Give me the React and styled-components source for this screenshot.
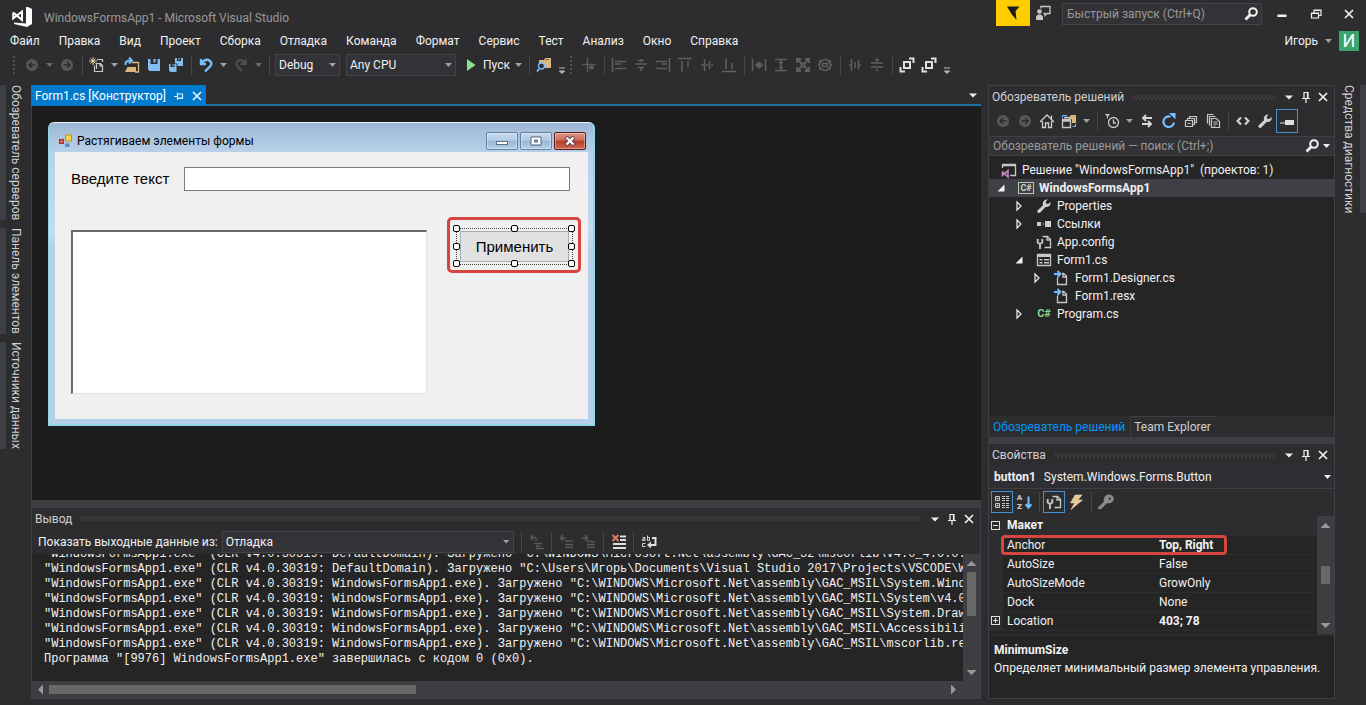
import { useState } from 'react'
import styled, { createGlobalStyle, css } from 'styled-components'

const GlobalStyle = createGlobalStyle`
  * {
    box-sizing: border-box;
  }
  body {
    margin: 0;
    background: #2d2d30;
    color: #f1f1f1;
    font-family: Roboto, "Noto Sans", sans-serif;
    font-size: 12px;
    line-height: 18px;
  }
  button, input, select {
    font: inherit;
    color: inherit;
    margin: 0;
    padding: 0;
    border: 0;
    border-radius: 0;
    background: none;
  }
  button {
    cursor: pointer;
  }
`

/* ---------- icons ---------- */

const Svg = styled.svg`
  display: block;
  flex: none;
  overflow: visible;
`

const icons = {
  back: <><circle cx="8" cy="8" r="6" fill="#58585b" /><path d="M11.5 8H5M8 5 5 8l3 3" stroke="#2d2d30" strokeWidth="1.5" fill="none" /></>,
  forward: <><circle cx="8" cy="8" r="6" fill="#58585b" /><path d="M4.500 8H11M8 5l3 3-3 3" stroke="#2d2d30" strokeWidth="1.5" fill="none" /></>,
  newItem: <>
    <path d="M8 2.500h5.500V5M5.500 8.500v6h6M7.500 12V6.500h4l2 2v6h-4M11 6.500V9h2.500" stroke="#c8c8c8" strokeWidth="1.200" fill="none" />
    <path d="M4 0v8M0 4h8M1.500 1.500l5 5M6.500 1.500l-5 5" stroke="#e6d3a8" fill="none" />
  </>,
  open: <>
    <path d="M1 15 3.500 10H12v5z" fill="#dcb67a" />
    <path d="M8 5.500h6.500V15H11" stroke="#dcb67a" strokeWidth="1.300" fill="none" />
    <path d="M1.500 8C1 4.500 3.500 3.500 7 3.500M5 .5l3 3-3 3" stroke="#75beff" strokeWidth="2" fill="none" />
  </>,
  save: <path d="M2 2h2.500v5h7V2H14v12H3.500L2 12.500zM7.500 2h2v3.500h-2z" fill="#83bdf2" />,
  saveAll: <path d="M7 1h2v3h4V1h2v8H9.500V6.500H7zM1 7h1.500v3h4V7H8.500v8H2.500L1 13.500zM10.500 1h1v2h-1zM4.500 7h1v2h-1z" fill="#83bdf2" />,
  undo: <path d="M3 2v5h5M3.500 6.500C6 3 9 2 11.500 3.500c3 2.500 2 5-.5 7L7 14.500" stroke="#75beff" strokeWidth="2.400" fill="none" />,
  redo: <path d="M12.500 2v5h-5M12 6.500C10 3 7 2 5 4c-2.500 2.500-1.500 4.500.5 6.500L9 14" stroke="#505053" strokeWidth="2" fill="none" />,
  play: <path d="M4 2 12.500 8 4 14z" fill="#8ae28a" />,
  findFolder: <>
    <path d="M3 3h5l1-2h6v10H9L3 7z" fill="#dcb67a" />
    <path d="M9 2.500h4" stroke="#8a7048" />
    <circle cx="5.500" cy="9" r="3" fill="#2d2d30" stroke="#75beff" strokeWidth="1.300" />
    <path d="M3.500 11.500 1 14.500" stroke="#75beff" strokeWidth="1.800" />
  </>,
  overflow: <path d="M5 11h6M5.500 14h5L8 16.500z" stroke="#b8b8b8" fill="#b8b8b8" strokeWidth="1" />,
  alignGrid: <path d="M1 7.500h14M6.500 1v14M9 9.500h3v2H9z" stroke="#5a5a5d" strokeWidth="1.500" fill="#5a5a5d" />,
  alignLeft: <path d="M1.500 1v14M4 4.500h11M4 7h6M4 11.500h11" stroke="#5f5f62" strokeWidth="1.500" />,
  alignCenter: <path d="M2 7h12M5 10.500h6M8 2v3M8 11v3M5 3.500h6" stroke="#5f5f62" strokeWidth="1.500" />,
  alignRight: <path d="M14.500 1v14M1 4.500h11M7 7h5M1 11.500h11" stroke="#5f5f62" strokeWidth="1.500" />,
  alignTop: <path d="M1 1.500h14M5 4v11M11 4v6" stroke="#5f5f62" strokeWidth="1.500" />,
  alignMiddle: <path d="M5.500 2v12M10.500 4v8M2 8h3M7 8h2M12 8h2" stroke="#5f5f62" strokeWidth="1.500" />,
  alignBottom: <path d="M1 14.500h14M5 1v11M11 6v6" stroke="#5f5f62" strokeWidth="1.500" />,
  sameWidth: <path d="M1.500 2v12M14.500 2v12M4 8h8M8 4.500v7M5.500 5.500l5 5M10.500 5.500l-5 5" stroke="#5f5f62" strokeWidth="1.500" />,
  sameHeight: <path d="M2 2.500h12M2 13.500h12M8 3v10M6 5.500h4M6 10.500h4" stroke="#5f5f62" strokeWidth="1.500" fill="none" />,
  sameSize: <path d="M2 6V2h4M10 2h4v4M14 10v4h-4M6 14H2v-4M2 2l4.500 4.500M14 2 9.500 6.500M14 14 9.500 9.500M2 14l4.500-4.500M6.500 6.500h3v3h-3z" stroke="#5f5f62" strokeWidth="1.800" fill="none" />,
  sizeGrid: <><circle cx="8" cy="8" r="5.500" stroke="#5f5f62" strokeWidth="1.500" fill="none" /><path d="M5.500 6.500h5v3h-5zM2 4h3M11 4h3M2 12h3M11 12h3M1 8h2M13 8h2" stroke="#5f5f62" strokeWidth="1.300" fill="none" /></>,
  spaceH: <path d="M4.500 2v12M8 5v6M11.500 3v9M2 8h2M12 8h2" stroke="#5f5f62" strokeWidth="1.500" />,
  spaceV: <path d="M2 6h12M2 10h12M8 1.500v3M8 11.500V14M6 3h4" stroke="#5f5f62" strokeWidth="1.500" />,
  bringFront: <path d="M5 5h6v6H5zM10 1.500h4.500V6M1.500 10v4.500H6" stroke="#e0e0e0" strokeWidth="2" fill="none" />,
  sendBack: <path d="M5 5h6v6H5zM10 1.500h4.500V6M1.500 10v4.500H6" stroke="#e0e0e0" strokeWidth="2" fill="none" />,
  search: <><circle cx="10" cy="6" r="3.800" stroke="#f1f1f1" strokeWidth="2" fill="none" /><path d="M7.500 8.500 2.500 13.500" stroke="#f1f1f1" strokeWidth="2.800" /></>,
  feedback: <>
    <circle cx="4.500" cy="6.500" r="2.300" fill="#c8c8c8" />
    <path d="M1 15v-3.500L3 9.500h3l2 2V15z" fill="#c8c8c8" />
    <path d="M6 3.500v-2h9v7h-3l-2 2v-2H8.500" stroke="#c8c8c8" strokeWidth="1.300" fill="none" />
  </>,
  flag: <path d="M2 1.500h12.500L10.500 6l1 9L6.500 9z" fill="#1b1b1b" />,
  minimize: <path d="M3.500 8.500h9v2.500h-9z" fill="#f1f1f1" />,
  restore: <path d="M6 6.500V4h7v5.500h-2.500M3.500 7h7v5h-7zM3.500 7.500h7M6 4.500h7" stroke="#f1f1f1" strokeWidth="1.200" fill="none" />,
  close: <path d="M4 4l8 8M12 4l-8 8" stroke="#f1f1f1" strokeWidth="1.700" />,
  pin: <path d="M6 9V3.500h4V9M4 9.500h8M9.500 3.500V9M8 9.500V14" stroke="#f1f1f1" strokeWidth="1.200" fill="none" />,
  pinTab: <path d="M8 6h4.500v4.500H8M7.500 4.500v7.500M4 8.500h4M8 10h4.500" stroke="#d5ecfa" strokeWidth="1.200" fill="none" />,
  caret: <path d="M4 6.500h8L8 10.500z" fill="#f1f1f1" />,
  home: <path d="M1 9 8 2l7 7M3.500 8v6.500h3V10h3v4.500h3V8M12.500 6V2.500" stroke="#d0d0d0" strokeWidth="1.300" fill="none" />,
  scope: <>
    <path d="M1.500 6.500h8v8h-8zM1 8h9M3 4.500h6V6" stroke="#c8c8c8" strokeWidth="1.300" fill="none" />
    <path d="M9 3.500 10 2h5v8h-4V6H9z" fill="#dcb67a" />
    <path d="M1.500 5V2.500H6M14.500 11v2.500h-3" stroke="#75beff" fill="none" />
  </>,
  pending: <><circle cx="9.500" cy="9.500" r="5" stroke="#c8c8c8" strokeWidth="1.300" fill="none" /><path d="M9.500 6.500v3.500H12" stroke="#c8c8c8" strokeWidth="1.300" fill="none" /><path d="M1 1h5L4 3.500V6L3 5V3.500z" fill="#c8c8c8" /></>,
  sync: <path d="M13 5H4M7 2 4 5l3 3M3 11h9M9 8l3 3-3 3" stroke="#d8d8d8" strokeWidth="1.900" fill="none" />,
  refresh: <>
    <path d="M13 9.500A5.300 5.300 0 1 1 9.500 3.700" stroke="#75beff" strokeWidth="2.200" fill="none" />
    <path d="M8 0h6.500v6.500z" fill="#75beff" />
  </>,
  collapse: <path d="M2.500 7.500h7v6h-7zM4.500 7V5.500h7v6H10M6.500 5V3.500h7v6H12M4.500 10.500h3" stroke="#c8c8c8" strokeWidth="1.200" fill="none" />,
  showAll: <path d="M6.500 5.500h5l3 3v6h-8zM4.500 12.500V3.500h6M2.500 10.500V1.500h6M8.500 9h4M8.500 11h4M8.500 13h2" stroke="#c8c8c8" strokeWidth="1.200" fill="none" />,
  code: <path d="M6 4.500 2.500 8 6 11.500M10 4.500 13.500 8 10 11.500" stroke="#d8d8d8" strokeWidth="2" fill="none" />,
  wrench: <path d="M1.500 12.500 7 7.200C6.200 4.200 8 1.500 11.500 1.600L9.600 4.200l.8 1.600 1.900.3 2.300-2c.6 3.300-2.300 5.600-5 4.800L4.300 14.500c-1.500 1.200-4-.5-2.800-2z" fill="#d0d0d0" />,
  preview: <path d="M1 9.500h5V7h9v5H6v-1.500H1z" fill="#e0e0e0" />,
  solution: <>
    <path d="M1.500 6V2.500h13v11H9M1 3.500h14" stroke="#c8c8c8" strokeWidth="1.300" fill="none" />
    <path d="M1.500 9.500v4L7 8.500v6.500L1.500 9.500" stroke="#c586c0" strokeWidth="1.600" fill="none" />
  </>,
  references: <path d="M1 6h4v4H1zM9 5h6v6H9zM6.500 7.500h1.500v1H6.500z" fill="#d0d0d0" />,
  config: <>
    <path d="M6.500 2.500h5l3 3v8h-6M11 2.500v3.500h3.500" stroke="#c8c8c8" strokeWidth="1.300" fill="none" />
    <path d="M1.700 5v3.500L4 10l2.300-1.500V5M4 9.500v5.500" stroke="#c8c8c8" strokeWidth="1.900" fill="none" />
  </>,
  form: <><path d="M1.500 2.500h13v11h-13z" stroke="#c8c8c8" strokeWidth="1.300" fill="none" /><path d="M1 2h14v3H1zM3.500 7h3v1.600h-3zM8 7h5v1.600H8zM3.500 10h3v1.600h-3zM8 10h5v1.600H8z" fill="#c8c8c8" /></>,
  nested: <>
    <path d="M3.500 7.500v7h9V6l-3-2.500H8M9 4v3h3.500" stroke="#c8c8c8" strokeWidth="1.300" fill="none" />
    <path d="M0 4h6M3.500 1l3 3-3 3" stroke="#75beff" strokeWidth="1.800" fill="none" />
  </>,
  categorized: <path d="M1.500 2.500h4v4h-4zM1.500 9.500h4v4h-4zM2.500 4.500h2M3.500 3.500v2M2.500 11.500h2M3.500 10.500v2M8 2.500h3M12 2.500h3M8 4.500h3M12 4.500h3M8 6.500h3M12 6.500h3M8 9.500h3M12 9.500h3M8 11.500h3M12 11.500h3M8 13.500h3M12 13.500h3" stroke="#c8c8c8" fill="none" />,
  sortArrow: <path d="M12 3v10M9.500 10l2.500 3 2.500-3" stroke="#75beff" strokeWidth="1.800" fill="none" />,
  events: <path d="M7 1h7l-4 5h4.500L3 15.500 6.500 9H2.500z" fill="#e8c896" stroke="#f3e2c4" strokeWidth="0.500" />,
  key: <path d="M0 13.500 6 7.500C5 4 7.500 .5 11 .5c5 0 6.500 6 2.500 8-2 1-3.500 1-4.500.5L7.500 11H6.500l-.5 2H4.500l-1 2H0zM11.500 3l1.500 1.500-1 1.500-1.500-1z" fill="#8a8a8c" fillRule="evenodd" />,
  outSource: <path d="M2 3.500h5M4 1 2 3.500 4 6M7 3.500V7M5 9.500h8M7 12h4M7 14.500h8" stroke="#5a5a5d" strokeWidth="1.400" fill="none" />,
  outPrev: <path d="M1 4h6M4 1 1.500 4 4 7M6 7h8M6 10.500h8M6 13.500h8" stroke="#5a5a5d" strokeWidth="1.600" fill="none" />,
  outNext: <path d="M1 4h6M4 1l2.500 3L4 7M6 7.500h8M6 10.500h8M6 13.500h8" stroke="#5a5a5d" strokeWidth="1.600" fill="none" />,
  clearAll: <><path d="M9 2.500h6M9 6h6M2 10h13M2 14h13" stroke="#e0e0e0" strokeWidth="2" /><path d="M1.500 1l6 6M7.500 1l-6 6" stroke="#e57a5e" strokeWidth="1.900" /></>,
}

const Icon = ({ name, size = 16 }) => (
  <Svg width={size} height={size} viewBox="0 0 16 16" aria-hidden="true">{icons[name]}</Svg>
)

/* ---------- shared parts ---------- */

const IconButton = styled.button`
  display: flex;
  align-items: center;
  justify-content: center;
  flex: none;
  width: ${p => p.$width || 22}px;
  height: ${p => p.$height || 22}px;
  border: 1px solid ${p => (p.$active ? '#4a90d0' : 'transparent')};
  background: ${p => (p.$fill ? p.$fill : 'transparent')};
  &:hover {
    background: ${p => (p.$fill ? p.$fill : '#3e3e40')};
  }
`

const Separator = styled.span`
  flex: none;
  width: 8px;
  height: 20px;
  background: linear-gradient(#464649, #464649) center / 1px 100% no-repeat;
`

const Caret = styled.span`
  flex: none;
  width: 13px;
  height: 4px;
  background: ${p => (p.$dim ? '#6a6a6d' : p.$bright ? '#f1f1f1' : '#a0a0a2')};
  clip-path: polygon(3px 0, 10px 0, 6.5px 4px);
`

const Grip = styled.span`
  flex: none;
  width: 6px;
  height: 20px;
  margin-right: 4px;
  background: radial-gradient(circle, #505053 1px, transparent 1px) 1px 0 / 4px 4px;
`

const Spacer = styled.span`
  flex: 1;
`

const Shell = styled.div`
  display: flex;
  flex-direction: column;
  min-height: 100vh;
  padding-bottom: 6px;
  overflow: hidden;
`

/* ---------- title, menu, toolbar ---------- */

const TitleBar = styled.header`
  display: flex;
  align-items: flex-start;
  height: 31px;
  padding-left: 11px;
`

const Title = styled.h1`
  flex: 1;
  margin: 9px 0 0 11px;
  font-size: 12px;
  font-weight: 400;
  color: #999;
`

const QuickSearch = styled.label`
  display: flex;
  align-items: center;
  width: 200px;
  height: 22px;
  margin: 3px 3px 0 7px;
  padding: 0 2px 0 4px;
  border: 1px solid #434346;
  background: #333337;
  input {
    flex: 1;
    min-width: 0;
    outline: none;
  }
  input::placeholder {
    color: #999;
    opacity: 1;
  }
`

const MenuBar = styled.nav`
  display: flex;
  align-items: center;
  height: 20px;
  gap: 19px;
  padding: 0 7px 0 10px;
`

const MenuItem = styled.a`
  color: #f1f1f1;
  text-decoration: none;
`

const Account = styled.button`
  display: flex;
  align-items: center;
  gap: 4px;
`

const Avatar = styled.span`
  width: 20px;
  height: 20px;
  background: #3aa46c;
  color: #fff;
  font-size: 18px;
  line-height: 20px;
  text-align: center;
`

const Toolbar = styled.div`
  display: flex;
  align-items: center;
  height: 28px;
  padding-left: 11px;
`

const SelectBox = styled.span`
  display: grid;
  align-items: center;
  width: ${p => p.$width}px;
  height: 22px;
  margin-left: ${p => p.$before || 0}px;
  margin-right: ${p => p.$after || 0}px;
  border: 1px solid #434346;
  background: #333337;
  select, > span {
    grid-area: 1 / 1;
  }
  select {
    appearance: none;
    height: 20px;
    padding-left: 3px;
    outline: none;
  }
  > span {
    justify-self: end;
    pointer-events: none;
  }
`

const StartButton = styled.button`
  display: flex;
  align-items: center;
  width: 65px;
  height: 22px;
  padding-left: 3px;
  svg {
    margin-right: 4px;
  }
`

const StartLabel = styled.span`
  flex: 1;
  text-align: left;
`

/* ---------- side strips ---------- */

const Body = styled.div`
  display: flex;
  flex: 1;
  padding-top: 6px;
`

const Strip = styled.aside`
  display: flex;
  flex-direction: column;
  align-items: ${p => (p.$right ? 'flex-end' : 'flex-start')};
  gap: 8px;
  width: 31px;
`

const StripTab = styled.button`
  writing-mode: vertical-rl;
  text-align: left;
  line-height: 18px;
  color: #d0d0d0;
  ${p => p.$right
    ? css`
      border-right: 6px solid #3f3f46;
      padding-right: 2px;
    `
    : css`
      border-left: 6px solid #3f3f46;
      padding-left: 1px;
    `}
`

/* ---------- document well ---------- */

const Center = styled.main`
  display: flex;
  flex-direction: column;
  flex: 1;
  min-width: 0;
  margin-right: 7px;
`

const TabRow = styled.div`
  display: flex;
  align-items: center;
  justify-content: space-between;
  height: 21px;
  border-bottom: 2px solid #1c6f9f;
`

const DocTab = styled.div`
  display: flex;
  align-items: center;
  align-self: flex-start;
  height: 21px;
  padding-left: 4px;
  background: #007acc;
  color: #fff;
  button:first-of-type {
    margin-left: 2px;
  }
`

const Designer = styled.section`
  flex: 1;
  padding: 16px;
  background: #1c1c1c;
  border-left: 1px solid #3f3f46;
`

const FormWindow = styled.div`
  width: 547px;
  border: 1px solid #8fd8e8;
  border-width: 1px 2px 2px 1px;
  border-top-color: #e8f1f8;
  border-radius: 6px 6px 0 0;
  background: linear-gradient(#9db8d4, #b9d1ea 30px, #c4daf0 110px, #b7d0ea 125px);
  padding: 0 5px 5px 6px;
`

const FormTitle = styled.div`
  display: flex;
  align-items: center;
  height: 29px;
  padding: 6px 2px 0 4px;
  color: #000;
  > span {
    flex: 1;
    margin-left: 4px;
  }
`

const CaptionButton = styled.button`
  display: flex;
  align-items: center;
  justify-content: center;
  width: 32px;
  height: 18px;
  margin-left: 2px;
  border: 1px solid ${p => (p.$red ? '#5a1a18' : '#6482a5')};
  border-radius: 2px;
  box-shadow: inset 0 0 0 1px rgba(255, 255, 255, 0.35);
  background: ${p => (p.$red
    ? 'linear-gradient(#e09a8a, #cf6a58 45%, #b5402c 50%, #cf6550)'
    : 'linear-gradient(#c5d9ee, #b4cce5 45%, #98b6d4 50%, #b5cfe8)')};
`

const FormClient = styled.div`
  padding: 15px 7px 25px 16px;
  background: #f0f0f0;
  color: #000;
  font-family: "Liberation Sans", Arial, sans-serif;
  font-size: 15px;
`

const Field = styled.label`
  display: flex;
  align-items: center;
  gap: 15px;
  margin: 0 11px 26px 0;
  input {
    flex: 1;
    min-width: 0;
    height: 24px;
    border: 1px solid #7a7a7a;
    background: #fff;
  }
`

const FormRow = styled.div`
  display: flex;
  align-items: flex-start;
  gap: 20px;
`

const ListBox = styled.div`
  flex: 1;
  height: 164px;
  margin-top: 13px;
  border: 1px solid;
  border-width: 2px 1px 1px 2px;
  border-color: #696969 #e3e3e3 #e3e3e3 #696969;
  background: #fff;
`

const RedFrame = styled.div`
  padding: 8px 5px 5px 6px;
  border: 3px solid #d6453f;
  border-radius: 5px;
`

const Selection = styled.div`
  position: relative;
  padding: 2px 3px;
  border: 1px dotted #444;
`

const ApplyButton = styled.button`
  display: block;
  width: 109px;
  height: 31px;
  border: 1px solid #adadad;
  background: #e1e1e1;
`

const Handle = styled.i`
  position: absolute;
  left: ${p => p.$x}%;
  top: ${p => p.$y}%;
  width: 7px;
  height: 7px;
  margin: -4px 0 0 -4px;
  border: 1px solid #000;
  border-radius: 2px;
  background: #fff;
`

/* ---------- output ---------- */

const Splitter = styled.div`
  height: ${p => p.$size}px;
  background: #3e3e42;
`

const PanelHeader = styled.header`
  display: flex;
  align-items: center;
  height: ${p => p.$height || 22}px;
  padding: 0 3px 0 3px;
  h2 {
    margin: 0;
    font-size: 12px;
    font-weight: 400;
    color: #d0d0d0;
  }
`

const HeaderDots = styled.span`
  flex: 1;
  height: 5px;
  margin: 0 6px 0 8px;
  background:
    radial-gradient(circle, #3e3e41 1px, transparent 1px) 0 0 / 4px 4px,
    radial-gradient(circle, #3e3e41 1px, transparent 1px) 2px 2px / 4px 4px;
`

const Output = styled.section`
  border: 1px solid #3f3f46;
  border-top: 0;
`

const OutputBar = styled.div`
  display: flex;
  align-items: center;
  height: 25px;
  padding: 0 6px;
`

const OutputLabel = styled.label`
  margin-right: 4px;
`

const LogArea = styled.div`
  display: flex;
  height: 127px;
  background: #252526;
`

const Log = styled.pre`
  display: flex;
  flex-direction: column;
  justify-content: flex-end;
  flex: 1;
  min-width: 0;
  height: 100%;
  margin: 0;
  padding: 0 0 14px 12px;
  overflow: hidden;
  font-family: "Liberation Mono", monospace;
  font-size: 12px;
  line-height: 15px;
`

const ScrollTrack = styled.div`
  display: flex;
  align-items: center;
  flex: none;
  flex-direction: ${p => (p.$horizontal ? 'row' : 'column')};
  width: ${p => (p.$horizontal ? 'auto' : '17px')};
  height: ${p => (p.$horizontal ? '17px' : 'auto')};
  padding: ${p => (p.$horizontal ? '0 22px 0 4px' : '4px 0')};
  background: #3e3e42;
`

const ScrollArrow = styled.button`
  width: 10px;
  height: 10px;
  flex: none;
  background: #999;
  clip-path: ${p => ({
    up: 'polygon(0 8px, 10px 8px, 5px 3px)',
    down: 'polygon(0 3px, 10px 3px, 5px 8px)',
    left: 'polygon(7px 0, 7px 10px, 2px 5px)',
    right: 'polygon(3px 0, 3px 10px, 8px 5px)',
  }[p.$dir])};
`

const ScrollRail = styled.div`
  flex: 1;
  ${p => (p.$horizontal ? 'padding: 0 3px;' : '')}
`

const ScrollThumb = styled.div`
  background: #686868;
  ${p => (p.$horizontal
    ? css`width: ${p.$size}; height: 9px;`
    : css`width: 9px; height: ${p.$size}; margin-top: ${p.$start || 0}px;`)}
`

/* ---------- right dock ---------- */

const Dock = styled.div`
  display: flex;
  flex-direction: column;
  width: 347px;
`

const Panel = styled.section`
  display: flex;
  flex-direction: column;
  flex: ${p => (p.$grow ? 1 : 'none')};
  border: 1px solid #3f3f46;
  border-bottom-width: ${p => (p.$grow ? 0 : 1)}px;
`

const PanelBar = styled.div`
  display: flex;
  align-items: center;
  height: ${p => p.$height}px;
  padding: 0 0 2px ${p => p.$left}px;
`

const TreeSearch = styled.label`
  display: flex;
  align-items: center;
  height: 20px;
  padding: 0 1px 0 4px;
  border: 1px solid #3f3f46;
  border-width: 1px 0;
  background: #333337;
  input {
    flex: 1;
    min-width: 0;
    outline: none;
  }
  input::placeholder {
    color: #999;
    opacity: 1;
  }
`

const Tree = styled.ul`
  flex: 1;
  margin: 0;
  padding: 5px 0 0;
  list-style: none;
  background: #252526;
`

const TreeRow = styled.li`
  display: flex;
  align-items: center;
  height: 18px;
  padding-left: ${p => (p.$depth ? p.$depth * 18 - 11 : 0)}px;
  background: ${p => (p.$selected ? '#3f3f46' : 'transparent')};
  font-weight: ${p => (p.$selected ? 700 : 400)};
  white-space: pre;
  svg:nth-child(2), span:nth-child(2) {
    margin: 0 5px 0 12px;
  }
`

const CsBadge = styled.span`
  width: 16px;
  height: 12px;
  flex: none;
  border: 1px solid ${p => (p.$boxed ? '#b8c8b8' : 'transparent')};
  color: ${p => (p.$boxed ? '#c8dcc8' : '#8ad68a')};
  font-size: ${p => (p.$boxed ? 9 : 11)}px;
  font-weight: 700;
  line-height: 10px;
  text-align: center;
`

const DockTabs = styled.div`
  display: flex;
  height: 21px;
  align-items: center;
`

const DockTab = styled.button`
  height: 21px;
  padding: 0 5px 0 3px;
  color: ${p => (p.$active ? '#0097fb' : '#d0d0d0')};
  border-left: 1px solid ${p => (p.$active ? 'transparent' : '#3f3f46')};
  border-top: 1px solid ${p => (p.$active ? 'transparent' : '#3f3f46')};
`

const ObjectPicker = styled.button`
  display: flex;
  align-items: center;
  height: 23px;
  padding-left: 5px;
  border-bottom: 1px solid #3f3f46;
  background: #2f2f33;
  b {
    margin-right: 8px;
  }
`

const SortLetters = styled.span`
  display: flex;
  flex-direction: column;
  width: 8px;
  font-size: 8px;
  font-weight: 700;
  line-height: 9px;
  color: #c8c8c8;
`

const GridWrap = styled.div`
  display: flex;
  height: 118px;
  overflow: hidden;
  background: #252526;
`

const PropTable = styled.table`
  flex: 1;
  border-collapse: collapse;
  table-layout: fixed;
  align-self: flex-start;
  td, th {
    height: 19px;
    padding: 0 0 0 4px;
    font-weight: 400;
    line-height: 16px;
    text-align: left;
    border-bottom: 1px solid #2d2d30;
  }
  td:first-child {
    width: 14px;
    padding: 0 0 0 2px;
    background: #2d2d30;
  }
`

const PropName = styled.th`
  position: relative;
  width: 152px;
`

const CategoryRow = styled.tr`
  background: #2d2d30;
  && th {
    font-weight: 700;
  }
`

const PropValue = styled.td`
  && {
    font-weight: ${p => (p.$bold ? 700 : 400)};
  }
`

const Highlight = styled.i`
  position: absolute;
  left: -2px;
  top: -1px;
  width: 226px;
  height: 20px;
  border: 3px solid #d6453f;
  border-radius: 4px;
  pointer-events: none;
`

const Expander = styled.button`
  display: block;
  width: 9px;
  height: 9px;
  border: 1px solid #e0e0e0;
  background:
    linear-gradient(#e0e0e0, #e0e0e0) center / 5px 1px no-repeat,
    linear-gradient(#e0e0e0, #e0e0e0) center / 1px ${p => (p.$open ? 0 : 5)}px no-repeat;
`

const Description = styled.div`
  height: 62px;
  margin-top: 2px;
  padding: 5px 5px;
  background: #252526;
  p, h3 {
    margin: 0;
    font-size: 12px;
    line-height: 18px;
  }
`

/* ---------- data ---------- */

const menu = ['Файл', 'Правка', 'Вид', 'Проект', 'Сборка', 'Отладка', 'Команда', 'Формат', 'Сервис', 'Тест', 'Анализ', 'Окно', 'Справка']

const handles = [[0, 0], [50, 0], [100, 0], [0, 50], [100, 50], [0, 100], [50, 100], [100, 100]]

const gac = '"WindowsFormsApp1.exe" (CLR v4.0.30319: WindowsFormsApp1.exe). Загружено "C:\\WINDOWS\\Microsoft.Net\\assembly\\GAC_MSIL\\'
const log = [
  '"WindowsFormsApp1.exe" (CLR v4.0.30319: DefaultDomain). Загружено "C:\\WINDOWS\\Microsoft.Net\\assembly\\GAC_32\\mscorlib\\v4.0_4.0.0.0__',
  '"WindowsFormsApp1.exe" (CLR v4.0.30319: DefaultDomain). Загружено "C:\\Users\\Игорь\\Documents\\Visual Studio 2017\\Projects\\VSCODE\\Windo',
  gac + 'System.Windows',
  gac + 'System\\v4.0_4.0',
  gac + 'System.Drawing\\',
  gac + 'Accessibility\\v',
  gac + 'mscorlib.resour',
  'Программа "[9976] WindowsFormsApp1.exe" завершилась с кодом 0 (0x0).',
]

const tree = [
  { depth: 0, icon: 'solution', text: 'Решение "WindowsFormsApp1"  (проектов: 1)' },
  { depth: 1, cs: 'boxed', text: 'WindowsFormsApp1', arrow: 'open', selected: true },
  { depth: 2, icon: 'wrench', text: 'Properties', arrow: 'closed' },
  { depth: 2, icon: 'references', text: 'Ссылки', arrow: 'closed' },
  { depth: 2, icon: 'config', text: 'App.config' },
  { depth: 2, icon: 'form', text: 'Form1.cs', arrow: 'open' },
  { depth: 3, icon: 'nested', text: 'Form1.Designer.cs', arrow: 'closed' },
  { depth: 3, icon: 'nested', text: 'Form1.resx' },
  { depth: 2, cs: 'plain', text: 'Program.cs', arrow: 'closed' },
]

const props = [
  { name: 'Anchor', value: 'Top, Right', bold: true, marked: true },
  { name: 'AutoSize', value: 'False' },
  { name: 'AutoSizeMode', value: 'GrowOnly' },
  { name: 'Dock', value: 'None' },
  { name: 'Location', value: '403; 78', bold: true, expandable: true },
]

/* ---------- components ---------- */

const Tools = ({ names }) => names.map((name) => (
  <IconButton key={name} aria-label={name}><Icon name={name} /></IconButton>
))

const Select = ({ label, id, options, width, before, after }) => (
  <SelectBox $width={width} $before={before} $after={after}>
    <select aria-label={label} id={id}>
      {options.map((o) => <option key={o}>{o}</option>)}
    </select>
    <Caret />
  </SelectBox>
)

const PanelTitle = ({ children, height }) => (
  <PanelHeader $height={height}>
    <h2>{children}</h2>
    <HeaderDots />
    <IconButton $width={16} aria-label="Меню"><Icon name="caret" /></IconButton>
    <IconButton $width={17} aria-label="Закрепить"><Icon name="pin" /></IconButton>
    <IconButton $width={17} aria-label="Закрыть"><Icon name="close" /></IconButton>
  </PanelHeader>
)

const TreeArrow = ({ state }) => (
  <Svg width="10" height="10" viewBox="0 0 10 10" aria-hidden="true">
    {state === 'open' && <path d="M8.500 1.500v7h-7z" fill="#f1f1f1" />}
    {state === 'closed' && <path d="M3 1v8L7 5z" stroke="#f1f1f1" strokeWidth="1.200" fill="none" />}
  </Svg>
)

const FormDesigner = () => {
  const [text, setText] = useState('')
  return (
    <FormWindow>
      <FormTitle>
        <Svg width="14" height="14" viewBox="0 0 14 14" aria-hidden="true">
          <path d="M0 5h5v5H0z" fill="#b8292b" /><path d="M1.500 6.500h2v2h-2z" fill="#e99" />
          <path d="M6.500 1h6v6h-6z" fill="#f7d34c" stroke="#c09018" />
          <path d="M6 9.500h4.500V13H6z" fill="#5b8bd0" />
        </Svg>
        <span>Растягиваем элементы формы</span>
        <CaptionButton aria-label="Свернуть">
          <Svg width="12" height="10" viewBox="0 0 12 10"><path d="M.5 5.500h11v3H.5z" fill="#fff" stroke="#5b6b80" /></Svg>
        </CaptionButton>
        <CaptionButton aria-label="Развернуть">
          <Svg width="12" height="10" viewBox="0 0 12 10"><path d="M1 1h10v8H1zM4.500 4h3v2h-3z" fill="#fff" fillRule="evenodd" stroke="#4f5f75" /></Svg>
        </CaptionButton>
        <CaptionButton $red aria-label="Закрыть">
          <Svg width="12" height="10" viewBox="0 0 12 10">
            <path d="M2 1l8 8M10 1 2 9" stroke="#5a3a40" strokeWidth="4" />
            <path d="M2.500 1.500l7 7M9.500 1.500l-7 7" stroke="#fff" strokeWidth="2.400" />
          </Svg>
        </CaptionButton>
      </FormTitle>
      <FormClient>
        <Field>
          Введите текст
          <input value={text} onChange={(e) => setText(e.target.value)} />
        </Field>
        <FormRow>
          <ListBox />
          <RedFrame>
            <Selection>
              <ApplyButton>Применить</ApplyButton>
              {handles.map(([x, y]) => <Handle key={`${x}-${y}`} $x={x} $y={y} />)}
            </Selection>
          </RedFrame>
        </FormRow>
      </FormClient>
    </FormWindow>
  )
}

const OutputPanel = () => (
  <Output>
    <PanelTitle height={21}>Вывод</PanelTitle>
    <OutputBar>
      <OutputLabel htmlFor="output-source">Показать выходные данные из:</OutputLabel>
      <Select id="output-source" options={['Отладка', 'Сборка']} width={292} after={4} />
      <Separator />
      <Tools names={['outSource']} />
      <Separator />
      <Tools names={['outPrev', 'outNext']} />
      <Separator />
      <Tools names={['clearAll']} />
      <Separator />
      <IconButton aria-label="Перенос по словам">
        <Svg width="16" height="16" viewBox="0 0 16 16" aria-hidden="true">
          <path d="M1.500 3.500H4v3H1.500V5H4M6.500 1.500v5M6.500 3.500H8.500v3h-2M4.500 9.500h-3v3h3" stroke="#d0d0d0" fill="none" />
          <path d="M11 4h3.500v7H9" stroke="#e0e0e0" strokeWidth="2" fill="none" />
          <path d="M6 11l4-3.500v7z" fill="#e0e0e0" />
        </Svg>
      </IconButton>
    </OutputBar>
    <LogArea>
      <Log>{log.map((line) => <span key={line}>{line}</span>)}</Log>
      <ScrollTrack>
        <ScrollArrow $dir="up" aria-label="Вверх" />
        <ScrollRail><ScrollThumb $size="44px" $start={4} /></ScrollRail>
        <ScrollArrow $dir="down" aria-label="Вниз" />
      </ScrollTrack>
    </LogArea>
    <ScrollTrack $horizontal>
      <ScrollArrow $dir="left" aria-label="Влево" />
      <ScrollRail $horizontal><ScrollThumb $horizontal $size="41%" /></ScrollRail>
      <ScrollArrow $dir="right" aria-label="Вправо" />
    </ScrollTrack>
  </Output>
)

const SolutionExplorer = () => (
  <Panel $grow>
    <PanelTitle>Обозреватель решений</PanelTitle>
    <PanelBar $height={28} $left={3}>
      <Tools names={['back', 'forward', 'home', 'scope']} />
      <Caret />
      <Separator />
      <Tools names={['pending']} />
      <Caret />
      <Tools names={['sync', 'refresh', 'collapse', 'showAll']} />
      <Separator />
      <Tools names={['code', 'wrench']} />
      <IconButton $active $height={24} aria-label="Просмотр"><Icon name="preview" /></IconButton>
    </PanelBar>
    <TreeSearch>
      <input aria-label="Поиск" placeholder="Обозреватель решений — поиск (Ctrl+;)" />
      <Icon name="search" />
      <Caret $bright />
    </TreeSearch>
    <Tree>
      {tree.map((n) => (
        <TreeRow key={n.text} $depth={n.depth} $selected={n.selected}>
          {n.depth ? <TreeArrow state={n.arrow} /> : <span />}
          {n.cs ? <CsBadge $boxed={n.cs === 'boxed'}>C#</CsBadge> : <Icon name={n.icon} />}
          {n.text}
        </TreeRow>
      ))}
    </Tree>
    <DockTabs>
      <DockTab $active>Обозреватель решений</DockTab>
      <DockTab>Team Explorer</DockTab>
    </DockTabs>
  </Panel>
)

const PropertiesPanel = () => (
  <Panel>
    <PanelTitle>Свойства</PanelTitle>
    <ObjectPicker>
      <b>button1</b>System.Windows.Forms.Button
      <Spacer />
      <Caret $bright />
    </ObjectPicker>
    <PanelBar $height={27} $left={2}>
      <IconButton $active aria-label="По категориям"><Icon name="categorized" /></IconButton>
      <IconButton aria-label="По алфавиту">
        <SortLetters><b>A</b><b>Z</b></SortLetters>
        <Svg width="9" height="14" viewBox="8 2 8 12" aria-hidden="true">{icons.sortArrow}</Svg>
      </IconButton>
      <Separator />
      <IconButton $active aria-label="Свойства"><Icon name="config" /></IconButton>
      <IconButton aria-label="События"><Icon name="events" /></IconButton>
      <Separator />
      <IconButton aria-label="Страницы свойств"><Icon name="key" /></IconButton>
    </PanelBar>
    <GridWrap>
      <PropTable>
        <tbody>
          <CategoryRow>
            <td><Expander $open aria-label="Свернуть" /></td>
            <PropName colSpan="2">Макет</PropName>
          </CategoryRow>
          {props.map((p) => (
            <tr key={p.name}>
              <td>{p.expandable && <Expander aria-label="Развернуть" />}</td>
              <PropName>{p.name}{p.marked && <Highlight />}</PropName>
              <PropValue $bold={p.bold}>{p.value}</PropValue>
            </tr>
          ))}
        </tbody>
      </PropTable>
      <ScrollTrack>
        <ScrollArrow $dir="up" aria-label="Вверх" />
        <ScrollRail><ScrollThumb $size="18px" $start={36} /></ScrollRail>
        <ScrollArrow $dir="down" aria-label="Вниз" />
      </ScrollTrack>
    </GridWrap>
    <Description>
      <h3>MinimumSize</h3>
      <p>Определяет минимальный размер элемента управления.</p>
    </Description>
  </Panel>
)

export default function App() {
  return (
    <Shell>
      <GlobalStyle />
      <TitleBar>
        <Svg width="22" height="28" viewBox="0 -6 22 28" aria-hidden="true">
          <path d="M15 1h2l4 2v15l-5 3L3 18v-1.500l12 1z" fill="#fff" />
          <path d="M2.200 6.500v6L11 5.500v8.500L2.200 6.500" stroke="#fff" strokeWidth="2" fill="none" />
        </Svg>
        <Title>WindowsFormsApp1 - Microsoft Visual Studio</Title>
        <IconButton $width={34} $height={26} $fill="#ffcc00" aria-label="Уведомления"><Icon name="flag" /></IconButton>
        <IconButton $width={25} $height={26} aria-label="Отзыв"><Icon name="feedback" /></IconButton>
        <QuickSearch>
          <input aria-label="Быстрый запуск" placeholder="Быстрый запуск (Ctrl+Q)" />
          <Icon name="search" />
        </QuickSearch>
        <IconButton $width={34} $height={28} aria-label="Свернуть"><Icon name="minimize" /></IconButton>
        <IconButton $width={33} $height={28} aria-label="Восстановить"><Icon name="restore" /></IconButton>
        <IconButton $width={34} $height={28} aria-label="Закрыть"><Icon name="close" /></IconButton>
      </TitleBar>
      <MenuBar>
        {menu.map((m) => <MenuItem key={m} href="#">{m}</MenuItem>)}
        <Spacer />
        <Account>Игорь <Caret /><Avatar>И</Avatar></Account>
      </MenuBar>
      <Toolbar>
        <Grip />
        <Tools names={['back']} />
        <Caret $dim />
        <Tools names={['forward']} />
        <Separator />
        <Tools names={['newItem']} />
        <Caret />
        <Tools names={['open', 'save', 'saveAll']} />
        <Separator />
        <Tools names={['undo']} />
        <Caret />
        <Tools names={['redo']} />
        <Caret $dim />
        <Separator />
        <Select label="Конфигурация" options={['Debug', 'Release']} width={65} before={2} after={6} />
        <Select label="Платформа" options={['Any CPU', 'x86']} width={110} after={4} />
        <StartButton><Icon name="play" /><StartLabel>Пуск</StartLabel><Caret /></StartButton>
        <Separator />
        <Tools names={['findFolder']} />
        <IconButton $width={13} aria-label="Параметры"><Icon name="overflow" /></IconButton>
        <Grip />
        <Tools names={['alignGrid']} />
        <Separator />
        <Tools names={['alignLeft', 'alignCenter', 'alignRight', 'alignTop', 'alignMiddle', 'alignBottom']} />
        <Separator />
        <Tools names={['sameWidth', 'sameHeight', 'sameSize', 'sizeGrid']} />
        <Separator />
        <Tools names={['spaceH', 'spaceV']} />
        <Separator />
        <Tools names={['bringFront', 'sendBack']} />
        <IconButton $width={13} aria-label="Параметры"><Icon name="overflow" /></IconButton>
      </Toolbar>
      <Body>
        <Strip>
          <StripTab>Обозреватель серверов</StripTab>
          <StripTab>Панель элементов</StripTab>
          <StripTab>Источники данных</StripTab>
        </Strip>
        <Center>
          <TabRow>
            <DocTab>
              Form1.cs [Конструктор]
              <IconButton $width={20} $height={20} aria-label="Закрепить"><Icon name="pinTab" /></IconButton>
              <IconButton $width={18} $height={20} aria-label="Закрыть"><Icon name="close" /></IconButton>
            </DocTab>
            <IconButton $width={16} $height={20} aria-label="Список окон"><Icon name="caret" /></IconButton>
          </TabRow>
          <Designer>
            <FormDesigner />
          </Designer>
          <Splitter $size={8} />
          <OutputPanel />
        </Center>
        <Dock>
          <SolutionExplorer />
          <Splitter $size={6} />
          <PropertiesPanel />
        </Dock>
        <Strip $right>
          <StripTab $right>Средства диагностики</StripTab>
        </Strip>
      </Body>
    </Shell>
  )
}
